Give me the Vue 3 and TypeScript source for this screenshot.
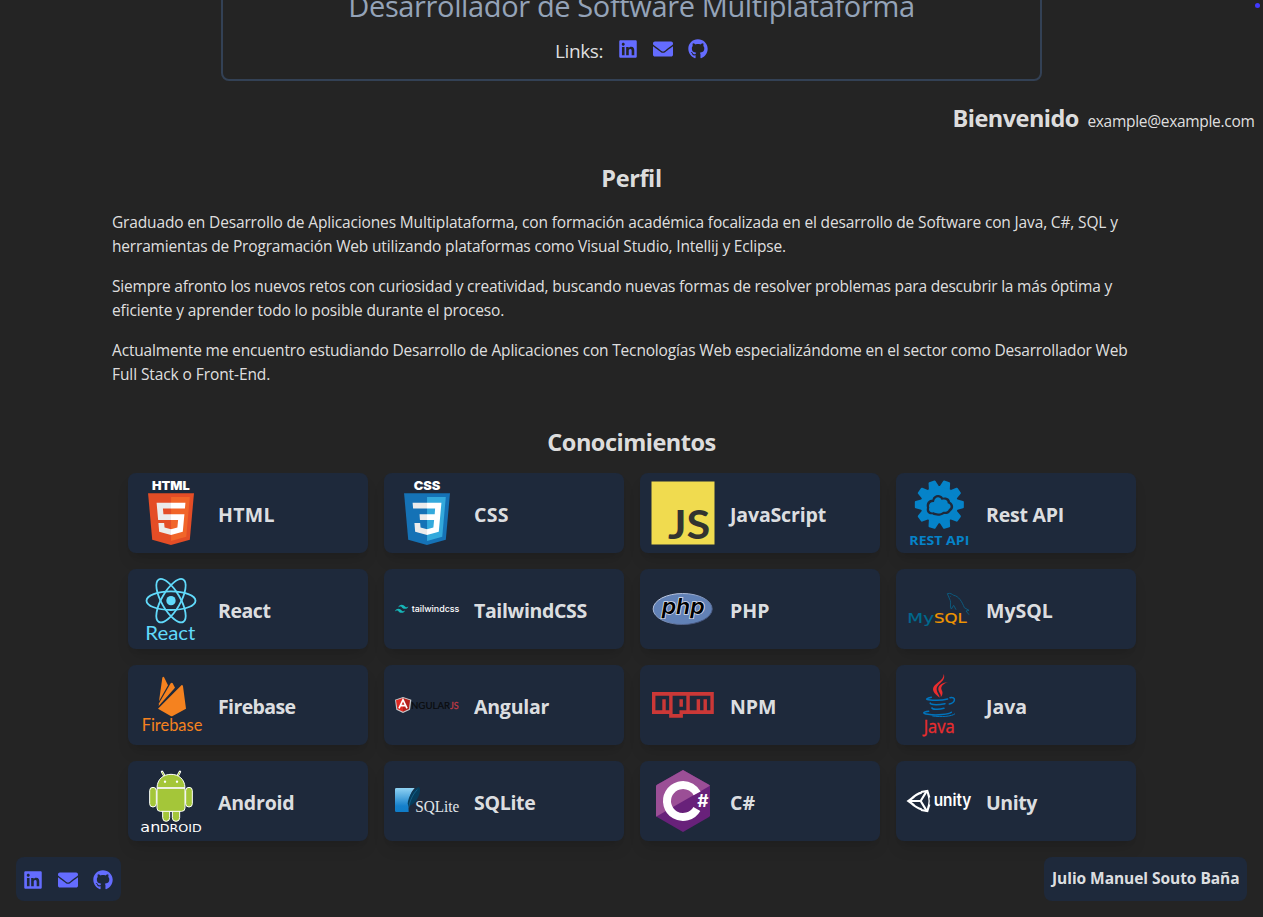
<script setup lang="ts">
interface LinkIcon {
  name: string
  viewBox: string
  path: string
}

const links: LinkIcon[] = [
  {
    name: 'LinkedIn',
    viewBox: '0 0 448 512',
    path: 'M416 32H31.9C14.3 32 0 46.5 0 64.3v383.4C0 465.5 14.3 480 31.9 480H416c17.6 0 32-14.5 32-32.3V64.3c0-17.8-14.4-32.3-32-32.3zM135.4 416H69V202.2h66.5V416zm-33.2-243c-21.3 0-38.5-17.3-38.5-38.5S80.9 96 102.2 96c21.2 0 38.5 17.3 38.5 38.5 0 21.3-17.2 38.5-38.5 38.5zm282.1 243h-66.4V312c0-24.8-.5-56.7-34.5-56.7-34.6 0-39.9 27-39.9 54.9V416h-66.4V202.2h63.7v29.2h.9c8.9-16.8 30.6-34.5 62.9-34.5 67.2 0 79.7 44.3 79.7 101.9V416z',
  },
  {
    name: 'Email',
    viewBox: '0 0 512 512',
    path: 'M502.3 190.8c3.9-3.1 9.7-.2 9.7 4.7V400c0 26.5-21.5 48-48 48H48c-26.5 0-48-21.5-48-48V195.6c0-5 5.7-7.8 9.7-4.7 22.4 17.4 52.1 39.5 154.1 113.6 21.1 15.4 56.7 47.8 92.2 47.6 35.7.3 72-32.8 92.3-47.6 102-74.1 131.6-96.3 154-113.7zM256 320c23.2.4 56.6-29.2 73.4-41.4 132.7-96.3 142.8-104.7 173.4-128.7 5.8-4.5 9.2-11.5 9.2-18.9v-19c0-26.5-21.5-48-48-48H48c-26.5 0-48 21.5-48 48v19c0 7.4 3.4 14.3 9.2 18.9 30.6 23.9 40.7 32.4 173.4 128.7 16.8 12.2 50.2 41.8 73.4 41.4z',
  },
  {
    name: 'GitHub',
    viewBox: '0 0 496 512',
    path: 'M244.8 8C106.1 8 0 113.3 0 252c0 110.9 69.8 205.8 169.5 239.2 12.8 2.3 17.3-5.6 17.3-12.1 0-6.2-.3-40.4-.3-61.4 0 0-70 15-84.7-29.8 0 0-11.4-29.1-27.8-36.6 0 0-22.9-15.7 1.6-15.4 0 0 24.9 2 38.6 25.8 21.9 38.6 58.6 27.5 72.9 20.9 2.3-16 8.8-27.1 16-33.7-55.9-6.2-112.3-14.3-112.3-110.5 0-27.5 7.6-41.3 23.6-58.9-2.6-6.5-11.1-33.3 2.6-67.9 20.9-6.5 69 27 69 27 20-5.6 41.5-8.5 62.8-8.5s42.8 2.9 62.8 8.5c0 0 48.1-33.6 69-27 13.7 34.7 5.2 61.4 2.6 67.9 16 17.7 25.8 31.5 25.8 58.9 0 96.5-58.9 104.2-114.8 110.5 9.2 7.9 17 22.9 17 46.4 0 33.7-.3 75.4-.3 83.6 0 6.5 4.6 14.4 17.3 12.1C428.2 457.8 496 362.9 496 252 496 113.3 383.5 8 244.8 8z',
  },
]

// Odd rows of logos use a 48-based origin, even rows a 336-based one.
const TOP = '57 48 192 192'
const LOW = '57 336 192 192'

interface Skill {
  id: string
  label: string
  box: string
}

const skills: Skill[] = [
  { id: 'html', label: 'HTML', box: TOP },
  { id: 'css', label: 'CSS', box: TOP },
  { id: 'js', label: 'JavaScript', box: TOP },
  { id: 'rest', label: 'Rest API', box: TOP },
  { id: 'react', label: 'React', box: LOW },
  { id: 'tailwind', label: 'TailwindCSS', box: LOW },
  { id: 'php', label: 'PHP', box: LOW },
  { id: 'mysql', label: 'MySQL', box: LOW },
  { id: 'firebase', label: 'Firebase', box: TOP },
  { id: 'angular', label: 'Angular', box: TOP },
  { id: 'npm', label: 'NPM', box: TOP },
  { id: 'java', label: 'Java', box: TOP },
  { id: 'android', label: 'Android', box: LOW },
  { id: 'sqlite', label: 'SQLite', box: LOW },
  { id: 'csharp', label: 'C#', box: LOW },
  { id: 'unity', label: 'Unity', box: LOW },
]

const teeth: number[] = Array.from({ length: 10 }, (_, i) => 18 + i * 36)
</script>

<template>
  <div class="page">
    <i class="dot"></i>

    <header class="hero">
      <h2 class="role">Desarrollador de Software Multiplataforma</h2>
      <div class="hero-links">
        <span class="links-label">Links:</span>
        <a v-for="l in links" :key="l.name" class="link">
          <svg :viewBox="l.viewBox"><path :d="l.path" /></svg>
        </a>
      </div>
    </header>

    <div class="welcome">
      <strong>Bienvenido</strong>
      <span class="email">example@example.com</span>
    </div>

    <section class="profile">
      <h2 class="heading perfil">Perfil</h2>
      <p>
        <span class="l1">Graduado en Desarrollo de Aplicaciones Multiplataforma, con formación académica focalizada en el desarrollo de Software con Java, C#, SQL y</span><br />
        <span class="l2">herramientas de Programación Web utilizando plataformas como Visual Studio, Intellij y Eclipse.</span>
      </p>
      <p>
        <span class="l3">Siempre afronto los nuevos retos con curiosidad y creatividad, buscando nuevas formas de resolver problemas para descubrir la más óptima y</span><br />
        <span class="l4">eficiente y aprender todo lo posible durante el proceso.</span>
      </p>
      <p>
        <span class="l5">Actualmente me encuentro estudiando Desarrollo de Aplicaciones con Tecnologías Web especializándome en el sector como Desarrollador Web</span><br />
        <span class="l6">Full Stack o Front-End.</span>
      </p>
    </section>

    <section class="skills">
      <h2 class="heading conoc">Conocimientos</h2>
      <div class="grid">
        <article v-for="s in skills" :key="s.id" class="card">
          <svg class="logo" :viewBox="s.box">
            <g v-if="s.id === 'html'">
              <text x="96" y="75" font-size="37" font-weight="900" textLength="113" lengthAdjust="spacingAndGlyphs" fill="#fff" class="inter">HTML</text>
              <g transform="translate(75 85) scale(.3055 .3025)">
                <path fill="#e44d26" d="M71,460 30,0 481,0 440,460 255,512z" />
                <path fill="#f16529" d="M256,472 405,431 440,37 256,37z" />
                <path fill="#ebebeb" d="M256,208 181,208 176,150 256,150 256,94 114,94 129,265 256,265z M256,355 192,338 188,293 132,293 139,382 256,414z" />
                <path fill="#fff" d="M255,208V265H325L318,338 255,355V414L371,382 387,208z M255,94V150H392L397,94z" />
              </g>
            </g>

            <g v-else-if="s.id === 'css'">
              <text x="113" y="75" font-size="37" font-weight="900" textLength="80" lengthAdjust="spacingAndGlyphs" fill="#fff" class="inter">CSS</text>
              <g transform="translate(75 85) scale(.3055 .3025)">
                <path fill="#1572b6" d="M71,460 30,0 481,0 440,460 255,512z" />
                <path fill="#33a9dc" d="M256,472 405,431 440,37 256,37z" />
                <path fill="#fff" d="M255,94H397L371,382 255,414V355L318,338 325,265H255V208H331L335,150H255z" />
                <path fill="#ebebeb" d="M114,94H256V150H119z M182,208H256V265H186z M256,355 192,338 188,293 132,293 139,382 256,414z" />
              </g>
            </g>

            <g v-else-if="s.id === 'js'">
              <rect x="58.500" y="49.500" width="189" height="189" fill="#f0db4f" />
              <text x="108" y="221" font-size="119" font-weight="700" textLength="127" lengthAdjust="spacingAndGlyphs" fill="#323330" class="lato">JS</text>
            </g>

            <g v-else-if="s.id === 'rest'" fill="#0583c9">
              <circle cx="154" cy="119" r="56" />
              <path v-for="t in teeth" :key="t" d="M138 67 143 48Q143.500 45.500 146 45.500H162Q164.500 45.500 165 48L170 67z" :transform="`rotate(${t} 154 119)`" />
              <path d="M133 148C119 149 114 138 117 128C113 112 123 104 133 104C137 87 158 86 165 98C178 95 186 103 186 110C198 116 198 132 189 137C184 146 175 148 168 147C158 154 144 154 133 148z" fill="#1e293b" />
              <path d="M137 142C127 144 120 137 124 128C120 118 128 110 138 111C140 94 156 93 161 105C172 101 180 107 179 115C190 118 190 129 183 132C179 141 171 141 166 140C158 147 145 147 137 142z" />
              <text x="64" y="239" font-size="38" font-weight="700" textLength="180" lengthAdjust="spacingAndGlyphs" class="open">REST API</text>
            </g>

            <g v-else-if="s.id === 'react'">
              <g fill="none" stroke="#61dafb" stroke-width="5.500">
                <ellipse v-for="a in [0, 60, 120]" :key="a" cx="153" cy="407" rx="73.500" ry="28" :transform="`rotate(${a} 153 407)`" />
              </g>
              <circle cx="153" cy="407" r="14" fill="#61dafb" />
              <text x="76" y="524" font-size="56" textLength="150" lengthAdjust="spacingAndGlyphs" fill="#61dafb" class="lato">React</text>
            </g>

            <g v-else-if="s.id === 'tailwind'">
              <path fill="#16b6b8" transform="translate(57 411.500) scale(1.667)" d="M12 4.800c-3.200 0-5.200 1.600-6 4.800 1.200-1.600 2.600-2.200 4.200-1.800.913.228 1.565.89 2.288 1.624C13.666 10.618 15.027 12 18 12c3.200 0 5.200-1.600 6-4.800-1.200 1.600-2.600 2.200-4.200 1.800-.913-.228-1.565-.89-2.288-1.624C16.337 6.182 14.976 4.800 12 4.800zM6 12c-3.200 0-5.200 1.600-6 4.800 1.200-1.600 2.600-2.200 4.200-1.800.913.228 1.565.89 2.288 1.624C7.666 17.818 9.027 19.200 12 19.200c3.200 0 5.200-1.600 6-4.800-1.200 1.600-2.600 2.200-4.200 1.800-.913-.228-1.565-.89-2.288-1.624C10.337 13.382 8.976 12 6 12z" />
              <text x="107" y="441" font-size="26" font-weight="500" textLength="143" lengthAdjust="spacingAndGlyphs" fill="#fff" class="inter">tailwindcss</text>
            </g>

            <g v-else-if="s.id === 'php'">
              <defs>
                <linearGradient id="phpEdge" x1="0" y1="0" x2="1" y2="1">
                  <stop offset="0" stop-color="#d7dff0" />
                  <stop offset=".5" stop-color="#8094bd" />
                  <stop offset="1" stop-color="#26345c" />
                </linearGradient>
              </defs>
              <ellipse cx="152" cy="432" rx="88.500" ry="46.500" fill="#6181b6" stroke="url(#phpEdge)" stroke-width="3" />
              <text x="89" y="447" font-size="65" font-weight="600" font-style="italic" textLength="129" lengthAdjust="spacingAndGlyphs" fill="#000" stroke="#d9dfec" stroke-width="5" paint-order="stroke" class="inter">php</text>
            </g>

            <g v-else-if="s.id === 'mysql'">
              <text x="58" y="473" font-size="41" textLength="80" lengthAdjust="spacingAndGlyphs" fill="#00698f" stroke="#00698f" stroke-width=".5" class="dejavu">My</text>
              <text x="138" y="473" font-size="40" textLength="98" lengthAdjust="spacingAndGlyphs" fill="#f09600" stroke="#f09600" stroke-width=".5" class="dejavu">SQL</text>
              <path fill="none" stroke="#0a6087" stroke-width="2.600" stroke-linejoin="round" d="M204 434 197 421 190 432C184 424 190 416 187 407L178 386C187 383 193 388 197 391C212 393 222 410 229 428L243 436 234 438 243 449M187 393v2" />
            </g>

            <g v-else-if="s.id === 'firebase'" fill="#f5821f">
              <path d="M127 62Q130 57 133 62L144 85 117 133z" />
              <path d="M152 79Q155 75 158 79L165 92 116 147 117 139z" />
              <path d="M114 155 182 87Q187 81 189 88L198 155 158 177Q155 179 152 177z" />
              <text x="65" y="222" font-size="51" textLength="182" lengthAdjust="spacingAndGlyphs" class="lato">Firebase</text>
            </g>

            <g v-else-if="s.id === 'angular'">
              <path fill="#c9cdd0" d="M81 120 106 128 102 158 81 168 61 158 57 128z" />
              <path fill="#e02a23" d="M81 123 60 130 64 156 81 164z" />
              <path fill="#b3211c" d="M81 123 102 130 99 156 81 164z" />
              <path fill="none" stroke="#fff" stroke-width="5" d="M69 154 81 128 93 154M74 146H88" />
              <text x="105" y="156" font-size="30" textLength="117" lengthAdjust="spacingAndGlyphs" fill="#0a0b0d" stroke="#0a0b0d" stroke-width=".6" class="lato">NGULAR</text>
              <text x="222" y="156" font-size="30" textLength="26" lengthAdjust="spacingAndGlyphs" fill="#c23a44" stroke="#c23a44" stroke-width=".8" class="lato">JS</text>
            </g>

            <g v-else-if="s.id === 'npm'">
              <path fill="#cb3837" fill-rule="evenodd" transform="translate(60 105) scale(10.300 11)" d="M0,0h18v6H9v1H5V6H0V0z M1,5h2V2h1v3h1V1H1V5z M6,1v5h2V5h2V1H6z M8,2h1v2H8V2z M11,1v4h2V2h1v3h1V2h1v3h1V1H11z" />
            </g>

            <g v-else-if="s.id === 'java'">
              <g fill="none" stroke="#0074bd" stroke-width="4.500" stroke-linecap="round">
                <path d="M130 121C116 124 112 127 121 128C140 131 164 130 179 126" />
                <path d="M186 122C204 118 204 137 184 141" />
                <path d="M127 138C124 142 142 146 171 140" />
                <path d="M132 152C130 157 150 159 168 154" />
                <path d="M122 163C106 165 100 169 120 172C146 176 184 172 190 166" />
                <path stroke-width="3" d="M134 177C160 181 192 178 200 171" />
              </g>
              <path fill="#ea2d2e" d="M167 51C176 72 146 80 146 96C146 107 154 112 155 122C146 114 135 107 135 96C136 79 168 73 167 51z" />
              <path fill="#ea2d2e" d="M180 76C165 80 157 89 161 99C166 107 163 115 158 121C161 111 151 106 151 96C151 84 164 77 180 76z" />
              <text x="107" y="227" font-size="55" textLength="93" lengthAdjust="spacingAndGlyphs" fill="#ea2d2e" stroke="#ea2d2e" class="open">Java</text>
            </g>

            <g v-else-if="s.id === 'android'">
              <g fill="#a4c639" stroke="#fff" stroke-width="3" stroke-linejoin="round">
                <path d="M126 344 135 360M180 344 171 360" stroke-width="7" stroke-linecap="round" />
                <path d="M127 346 134 359M179 346 172 359" stroke="#a4c639" stroke-linecap="round" />
                <rect x="89" y="391" width="20" height="59" rx="10" />
                <rect x="197" y="391" width="20" height="59" rx="10" />
                <path d="M128 455V482Q128 493 138.500 493T149 482V463H157V482Q157 493 168 493T179 482V455z" />
                <path d="M111 392C112 366 130 352 153 352S194 366 195 392z" />
                <path d="M111 394H195V453Q195 463 185 463H121Q111 463 111 453z" />
              </g>
              <circle cx="135" cy="374" r="3.500" fill="#fff" />
              <circle cx="171" cy="374" r="3.500" fill="#fff" />
              <g fill="#fff" class="dejavu">
                <text x="61" y="524" font-size="43" textLength="60" lengthAdjust="spacingAndGlyphs">an</text>
                <text x="119" y="524" font-size="34" textLength="126" lengthAdjust="spacingAndGlyphs">DROID</text>
              </g>
            </g>

            <g v-else-if="s.id === 'sqlite'">
              <defs>
                <linearGradient id="sqliteFill" x1="0" y1="0" x2="0" y2="1">
                  <stop offset="0" stop-color="#8fd2f3" />
                  <stop offset=".75" stop-color="#1580cb" />
                  <stop offset="1" stop-color="#0f7cc8" />
                </linearGradient>
              </defs>
              <path fill="url(#sqliteFill)" d="M61 393H116C102 408 96 427 98 465H61Q57 465 57 461V397Q57 393 61 393z" />
              <path fill="#063d5c" d="M129 390C136 396 131 418 118 434C112 441 104 444 98 449L95 440C96 421 113 393 129 390z" />
              <path fill="none" stroke="#1f7fb0" stroke-width="1.500" d="M124 398C112 410 102 428 98 452" />
              <text x="118" y="466" font-size="51" textLength="132" lengthAdjust="spacingAndGlyphs" fill="#e2e6ea" class="serif">SQLite</text>
            </g>

            <g v-else-if="s.id === 'csharp'">
              <path fill="#68217a" d="M153 339 231 383Q234 385 234 389V475Q234 478 231 480L153 525 75 480Q72 478 72 475V389Q72 385 75 383z" />
              <path fill="#9b4f96" d="M153 339 231 383 234 386 72 479V389Q72 385 75 383z" />
              <circle cx="153" cy="432" r="48" fill="none" stroke="#fff" stroke-width="24" stroke-dasharray="251.300 400" transform="rotate(30 153 432)" />
              <text x="196" y="450" font-size="50" font-weight="700" textLength="34" lengthAdjust="spacingAndGlyphs" fill="#fff" class="inter">#</text>
            </g>

            <g v-else>
              <g fill="none" stroke="#fff" stroke-width="6.500">
                <path d="M61 432H98L117 401M98 432 117 463" />
                <path d="M79 445 61 432 79 419M69 426C80 416 92 409 101 407M69 438C80 448 92 455 101 457" />
                <path d="M99 405 118 402 124 422M99 459 118 462 124 442" />
                <path stroke-width="4" d="M121 412Q126 432 121 452" />
              </g>
              <text x="137" y="446" font-size="50" font-weight="600" textLength="113" lengthAdjust="spacingAndGlyphs" fill="#fff" class="inter">unity</text>
            </g>
          </svg>
          <h3 :class="['name', s.id]">{{ s.label }}</h3>
        </article>
      </div>
    </section>

    <footer class="footer">
      <div class="foot-links">
        <a v-for="l in links" :key="l.name" class="link">
          <svg :viewBox="l.viewBox"><path :d="l.path" /></svg>
        </a>
      </div>
      <div class="author">Julio Manuel Souto Baña</div>
    </footer>
  </div>
</template>

<style>
body {
  margin: 0;
  background: #242424;
}
</style>

<style scoped>
.page {
  position: relative;
  box-sizing: border-box;
  height: 917px;
  overflow: hidden;
  background: #242424;
  color: rgba(255, 255, 255, 0.87);
  font-family: 'Open Sans', 'Noto Sans', sans-serif;
  font-size: 15.5px;
  line-height: 24px;
}
h2,
h3,
p {
  margin: 0;
}
.dot {
  position: absolute;
  top: 3px;
  right: 3.5px;
  width: 5px;
  height: 5px;
  border-radius: 50%;
  background: #4038ff;
}
.hero {
  box-sizing: border-box;
  width: 821px;
  height: 100px;
  margin: -19px auto 0;
  border: 2px solid #334155;
  border-radius: 8px;
  display: flex;
  flex-direction: column;
  align-items: center;
}
.role {
  margin-top: 5px;
  font-size: 29px;
  line-height: 36px;
  font-weight: 400;
  letter-spacing: -0.37px;
  color: #94a3b8;
  white-space: nowrap;
}
.hero-links {
  display: flex;
  align-items: center;
  gap: 15px;
  margin-top: 10px;
  height: 29px;
}
.links-label {
  font-size: 19px;
  line-height: 28px;
  letter-spacing: -0.4px;
  margin-top: 4px;
}
.link {
  display: flex;
  width: 20px;
  height: 20px;
}
.link svg {
  width: 20px;
  height: 20px;
  fill: #646cff;
}
.welcome {
  display: flex;
  justify-content: flex-end;
  align-items: baseline;
  gap: 8.5px;
  padding-right: 8.5px;
  margin-top: 21px;
  height: 32px;
}
.welcome strong {
  font-size: 23.5px;
  line-height: 32px;
  letter-spacing: -0.52px;
}
.email {
  letter-spacing: -0.3px;
}
.profile {
  width: 1039px;
  margin: 28px auto 0;
}
.heading {
  font-size: 23.5px;
  line-height: 32px;
  text-align: center;
}
.perfil {
  letter-spacing: -0.4px;
}
.conoc {
  letter-spacing: -0.5px;
}
.profile p {
  margin-top: 16px;
  white-space: nowrap;
}
.l1 {
  letter-spacing: -0.151px;
}
.l2 {
  letter-spacing: -0.174px;
}
.l3 {
  letter-spacing: -0.208px;
}
.l4 {
  letter-spacing: -0.145px;
}
.l5 {
  letter-spacing: -0.172px;
}
.l6 {
  letter-spacing: -0.09px;
}
.skills {
  margin-top: 40px;
}
.grid {
  display: grid;
  grid-template-columns: repeat(4, 240px);
  grid-auto-rows: 80px;
  gap: 16px;
  justify-content: center;
  margin-top: 15px;
}
.card {
  box-sizing: border-box;
  display: flex;
  align-items: center;
  gap: 15.5px;
  padding: 8px 11px;
  border-radius: 8px;
  background: #1e293b;
  box-shadow: 0 10px 15px -3px rgba(0, 0, 0, 0.1), 0 4px 6px -4px rgba(0, 0, 0, 0.1);
}
.logo {
  flex: none;
  width: 64px;
  height: 64px;
  overflow: visible;
}
.name {
  font-size: 19.5px;
  line-height: 28px;
  padding-top: 3px;
}
.name.html,
.name.css {
  letter-spacing: 0.3px;
}
.name.js {
  letter-spacing: -0.15px;
}
.name.rest,
.name.angular {
  letter-spacing: -0.22px;
}
.name.react,
.name.unity {
  letter-spacing: -0.45px;
}
.name.tailwind {
  letter-spacing: -0.35px;
}
.name.firebase {
  letter-spacing: -0.62px;
}
.name.android {
  letter-spacing: -0.2px;
}
.name.sqlite {
  letter-spacing: -0.28px;
}
.inter {
  font-family: Inter, sans-serif;
}
.lato {
  font-family: Lato, sans-serif;
}
.open {
  font-family: 'Open Sans', sans-serif;
}
.dejavu {
  font-family: 'DejaVu Sans', sans-serif;
}
.serif {
  font-family: 'Liberation Serif', serif;
}
.footer {
  display: flex;
  justify-content: space-between;
  padding: 0 16px;
  margin-top: 16px;
}
.foot-links {
  box-sizing: border-box;
  display: flex;
  align-items: center;
  gap: 15px;
  width: 105px;
  height: 44px;
  padding: 1px 7px 0;
  border-radius: 8px;
  background: #1e293b;
}
.author {
  box-sizing: border-box;
  width: 203px;
  height: 44px;
  padding: 9px 8px;
  border-radius: 8px;
  background: #1e293b;
  font-weight: 700;
  letter-spacing: -0.05px;
  white-space: nowrap;
}
</style>
